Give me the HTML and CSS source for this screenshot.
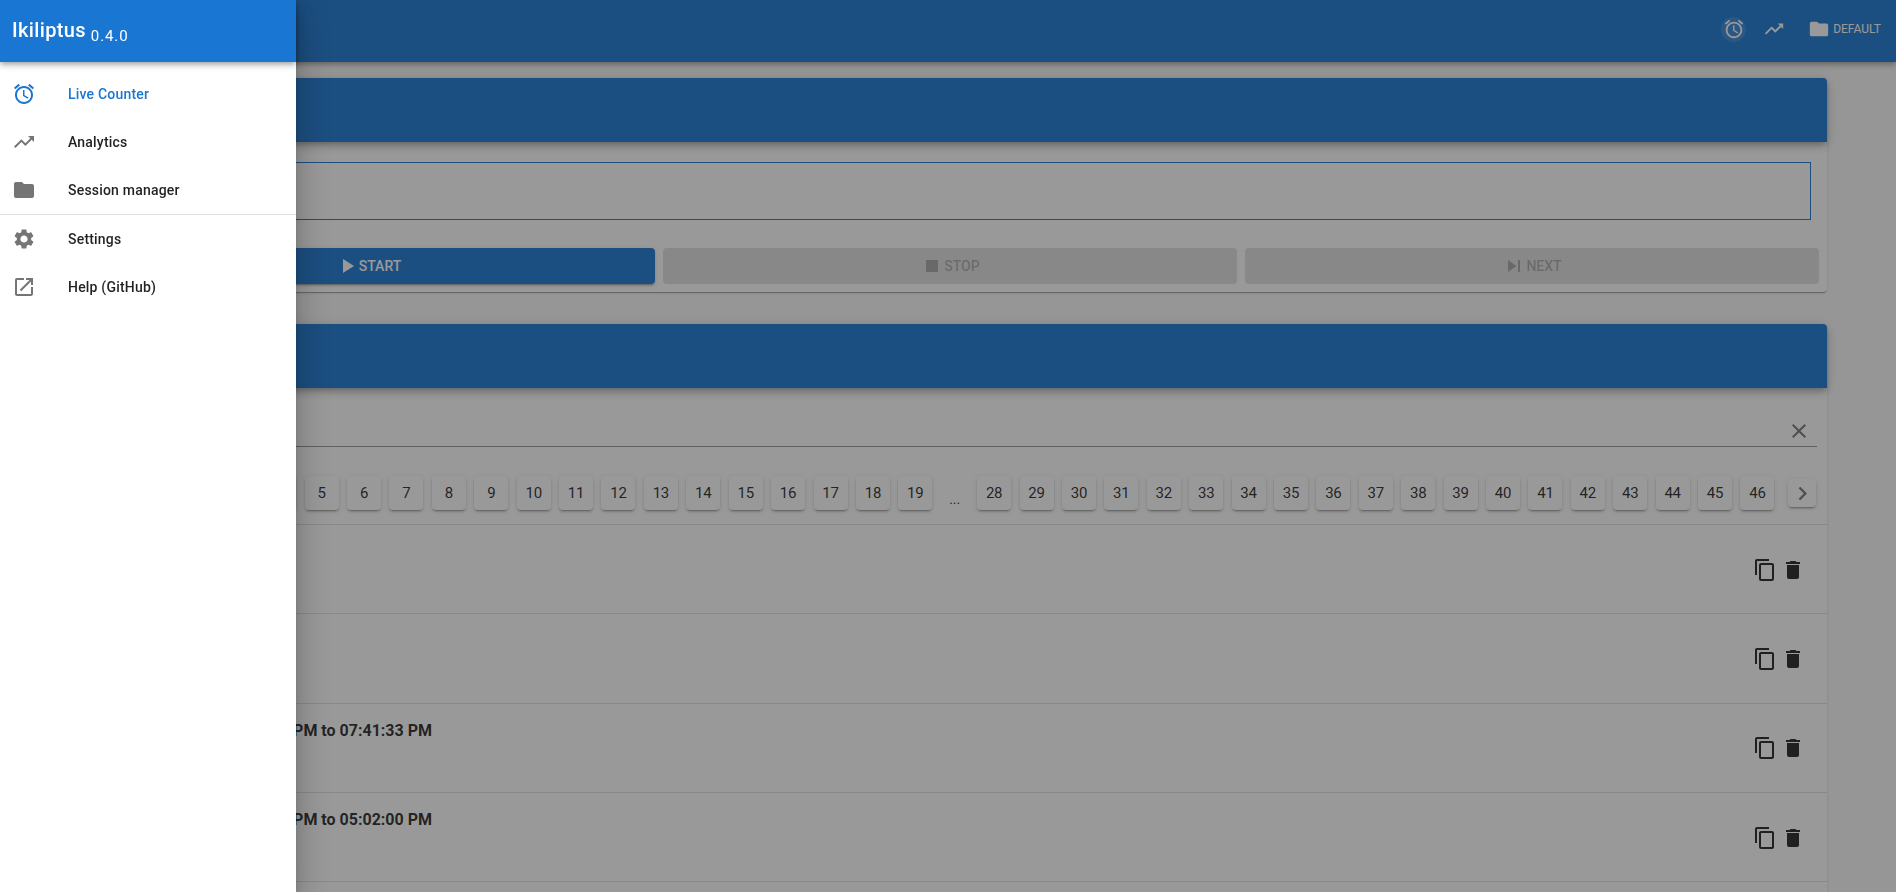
FILE: index.html
```html
<!DOCTYPE html>

<html>

<head>
    <title>Ikiliptus</title>
    <link rel="stylesheet" href="styles.css">
</head>

<body>
    <svg class="icon-defs" width="0" height="0">
        <symbol id="i-alarm" viewBox="0 0 24 24"><path d="M22 5.72l-4.6-3.86-1.29 1.53 4.6 3.86L22 5.72zM7.88 3.39L6.6 1.86 2 5.71l1.29 1.53 4.59-3.85zM12.5 8H11v6l4.75 2.85.75-1.23-4-2.37V8zM12 4c-4.97 0-9 4.03-9 9s4.02 9 9 9c4.97 0 9-4.03 9-9s-4.03-9-9-9zm0 16c-3.87 0-7-3.13-7-7s3.13-7 7-7 7 3.13 7 7-3.13 7-7 7z"/></symbol>
        <symbol id="i-trend" viewBox="0 0 24 24"><path d="M16 6l2.29 2.29-4.88 4.88-4-4L2 16.59 3.41 18l6-6 4 4 6.3-6.29L22 12V6z"/></symbol>
        <symbol id="i-folder" viewBox="0 0 24 24"><path d="M10 4H4c-1.1 0-1.99.9-1.99 2L2 18c0 1.1.9 2 2 2h16c1.1 0 2-.9 2-2V8c0-1.1-.9-2-2-2h-8l-2-2z"/></symbol>
        <symbol id="i-settings" viewBox="0 0 24 24"><path d="M19.14 12.94c.04-.3.06-.61.06-.94 0-.32-.02-.64-.07-.94l2.03-1.58c.18-.14.23-.41.12-.61l-1.92-3.32c-.12-.22-.37-.29-.59-.22l-2.39.96c-.5-.38-1.03-.7-1.62-.94l-.36-2.54c-.04-.24-.24-.41-.48-.41h-3.84c-.24 0-.43.17-.47.41l-.36 2.54c-.59.24-1.13.57-1.62.94l-2.39-.96c-.22-.08-.47 0-.59.22L2.74 8.87c-.12.21-.08.47.12.61l2.03 1.58c-.05.3-.09.63-.09.94s.02.64.07.94l-2.03 1.58c-.18.14-.23.41-.12.61l1.92 3.32c.12.22.37.29.59.22l2.39-.96c.5.38 1.03.7 1.62.94l.36 2.54c.05.24.24.41.48.41h3.84c.24 0 .44-.17.47-.41l.36-2.54c.59-.24 1.13-.56 1.62-.94l2.39.96c.22.08.47 0 .59-.22l1.92-3.32c.12-.22.07-.47-.12-.61l-2.01-1.58zM12 15.6c-1.98 0-3.6-1.62-3.6-3.6s1.62-3.6 3.6-3.6 3.6 1.62 3.6 3.6-1.62 3.6-3.6 3.6z"/></symbol>
        <symbol id="i-open" viewBox="0 0 24 24"><path d="M19 19H5V5h7V3H5c-1.11 0-2 .9-2 2v14c0 1.1.89 2 2 2h14c1.1 0 2-.9 2-2v-7h-2v7zM14 3v2h3.59l-9.83 9.83 1.41 1.41L19 6.41V10h2V3h-7z"/></symbol>
        <symbol id="i-play" viewBox="0 0 24 24"><path d="M8 5v14l11-7z"/></symbol>
        <symbol id="i-stop" viewBox="0 0 24 24"><path d="M6 6h12v12H6z"/></symbol>
        <symbol id="i-next" viewBox="0 0 24 24"><path d="M6 18l8.5-6L6 6v12zM16 6v12h2V6h-2z"/></symbol>
        <symbol id="i-close" viewBox="0 0 24 24"><path d="M19 6.41L17.59 5 12 10.59 6.41 5 5 6.41 10.59 12 5 17.59 6.41 19 12 13.41 17.59 19 19 17.59 13.41 12z"/></symbol>
        <symbol id="i-left" viewBox="0 0 24 24"><path d="M15.41 7.41L14 6l-6 6 6 6 1.41-1.41L10.83 12z"/></symbol>
        <symbol id="i-right" viewBox="0 0 24 24"><path d="M10 6L8.59 7.41 13.17 12l-4.58 4.59L10 18l6-6z"/></symbol>
        <symbol id="i-copy" viewBox="0 0 24 24"><path d="M16 1H4c-1.1 0-2 .9-2 2v14h2V3h12V1zm3 4H8c-1.1 0-2 .9-2 2v14c0 1.1.9 2 2 2h11c1.1 0 2-.9 2-2V7c0-1.1-.9-2-2-2zm0 16H8V7h11v14z"/></symbol>
        <symbol id="i-delete" viewBox="0 0 24 24"><path d="M6 19c0 1.1.9 2 2 2h8c1.1 0 2-.9 2-2V7H6v12zM19 4h-3.5l-1-1h-5l-1 1H5v2h14V4z"/></symbol>
    </svg>

    <header class="toolbar">
        <span class="tool-btn tool-active"><svg class="icon-tool"><use href="#i-alarm"/></svg></span>
        <span class="tool-btn"><svg class="icon-tool"><use href="#i-trend"/></svg></span>
        <span class="tool-session"><svg class="icon-tool"><use href="#i-folder"/></svg>DEFAULT</span>
    </header>

    <main class="content">
        <section class="card">
            <div class="card-head"></div>
            <div class="counter-box"></div>
            <div class="actions">
                <button class="action action-primary"><svg class="icon"><use href="#i-play"/></svg>START</button>
                <button class="action"><svg class="icon"><use href="#i-stop"/></svg>STOP</button>
                <button class="action"><svg class="icon"><use href="#i-next"/></svg>NEXT</button>
            </div>
        </section>

        <section class="card">
            <div class="card-head"></div>
            <div class="filter">
                <svg class="icon icon-grey"><use href="#i-close"/></svg>
            </div>
            <div class="pager">
                <button class="page page-arrow"><svg class="icon-arrow"><use href="#i-left"/></svg></button>
                <button class="page page-first">1</button>
                <button class="page">2</button>
                <button class="page">3</button>
                <button class="page">4</button>
                <button class="page">5</button>
                <button class="page">6</button>
                <button class="page">7</button>
                <button class="page">8</button>
                <button class="page">9</button>
                <button class="page">10</button>
                <button class="page">11</button>
                <button class="page">12</button>
                <button class="page">13</button>
                <button class="page">14</button>
                <button class="page">15</button>
                <button class="page">16</button>
                <button class="page">17</button>
                <button class="page">18</button>
                <button class="page">19</button>
                <span class="page-gap">...</span>
                <button class="page">28</button>
                <button class="page">29</button>
                <button class="page">30</button>
                <button class="page">31</button>
                <button class="page">32</button>
                <button class="page">33</button>
                <button class="page">34</button>
                <button class="page">35</button>
                <button class="page">36</button>
                <button class="page">37</button>
                <button class="page">38</button>
                <button class="page">39</button>
                <button class="page">40</button>
                <button class="page">41</button>
                <button class="page">42</button>
                <button class="page">43</button>
                <button class="page">44</button>
                <button class="page">45</button>
                <button class="page">46</button>
                <button class="page page-arrow page-last"><svg class="icon-arrow"><use href="#i-right"/></svg></button>
            </div>

            <div class="row">
                <div class="row-title"></div>
                <div class="row-tools">
                    <svg class="icon"><use href="#i-copy"/></svg>
                    <svg class="icon"><use href="#i-delete"/></svg>
                </div>
            </div>
            <div class="row">
                <div class="row-title"></div>
                <div class="row-tools">
                    <svg class="icon"><use href="#i-copy"/></svg>
                    <svg class="icon"><use href="#i-delete"/></svg>
                </div>
            </div>
            <div class="row">
                <div class="row-title">07:12:48 PM to 07:41:33 PM</div>
                <div class="row-tools">
                    <svg class="icon"><use href="#i-copy"/></svg>
                    <svg class="icon"><use href="#i-delete"/></svg>
                </div>
            </div>
            <div class="row">
                <div class="row-title">04:36:05 PM to 05:02:00 PM</div>
                <div class="row-tools">
                    <svg class="icon"><use href="#i-copy"/></svg>
                    <svg class="icon"><use href="#i-delete"/></svg>
                </div>
            </div>
            <div class="row"></div>
        </section>
    </main>

    <div class="backdrop"></div>

    <aside class="drawer">
        <div class="drawer-head">
            <span class="brand">Ikiliptus</span>
            <span class="version">0.4.0</span>
        </div>
        <nav class="nav">
            <a class="nav-item nav-active"><svg class="icon"><use href="#i-alarm"/></svg>Live Counter</a>
            <a class="nav-item"><svg class="icon"><use href="#i-trend"/></svg>Analytics</a>
            <a class="nav-item"><svg class="icon"><use href="#i-folder"/></svg>Session manager</a>
            <hr class="nav-line">
            <a class="nav-item"><svg class="icon"><use href="#i-settings"/></svg>Settings</a>
            <a class="nav-item"><svg class="icon"><use href="#i-open"/></svg>Help (GitHub)</a>
        </nav>
    </aside>
</body>

</html>
```

FILE: styles.css
```css
html,
body {
    height: 100%;
}

body {
    margin: 0;
    overflow: hidden;
    background-color: #fafafa;
    color: rgba(0, 0, 0, 0.87);
    font-family: Roboto, 'Noto Sans', sans-serif;
    font-size: 14px;
}

.icon-defs {
    display: block;
    height: 0;
}

.icon {
    display: block;
    flex: none;
    width: 24px;
    height: 24px;
    fill: currentColor;
}

.icon-grey {
    fill: rgba(0, 0, 0, 0.54);
}

.icon-tool {
    display: block;
    flex: none;
    width: 22px;
    height: 22px;
    fill: currentColor;
}

.icon-arrow {
    display: block;
    flex: none;
    width: 27px;
    height: 27px;
    fill: rgba(0, 0, 0, 0.54);
}

/* top bar */
.toolbar {
    display: flex;
    align-items: center;
    justify-content: flex-end;
    height: 58px;
    padding: 0 15px 4px 0;
    background-color: #1976d2;
    color: #fff;
    box-shadow: 0 2px 4px -1px rgba(0, 0, 0, 0.2), 0 4px 5px rgba(0, 0, 0, 0.14), 0 1px 10px rgba(0, 0, 0, 0.12);
}

.tool-btn {
    display: flex;
    align-items: center;
    justify-content: center;
    width: 25px;
    height: 25px;
    margin-right: 15px;
    border-radius: 50%;
}

.tool-active {
    background-color: rgba(255, 255, 255, 0.12);
}

.tool-session {
    display: flex;
    align-items: center;
    gap: 3px;
    margin-left: 7px;
    font-size: 12px;
}

/* page content */
.content {
    padding: 16px 69px 0 73px;
}

.card {
    margin-bottom: 32px;
    background-color: #fff;
    border-radius: 4px;
    box-shadow: 0 2px 1px -1px rgba(0, 0, 0, 0.2), 0 1px 1px rgba(0, 0, 0, 0.14), 0 1px 3px rgba(0, 0, 0, 0.12);
}

.card-head {
    height: 64px;
    background-color: #1976d2;
    border-radius: 4px 4px 0 0;
    box-shadow: 0 3px 5px -1px rgba(0, 0, 0, 0.2), 0 5px 8px rgba(0, 0, 0, 0.14), 0 1px 14px rgba(0, 0, 0, 0.12);
}

.counter-box {
    height: 56px;
    margin: 20px 16px 0;
    border: 1px solid #1976d2;
}

.actions {
    display: flex;
    gap: 8px;
    padding: 28px 8px 8px;
}

.action {
    display: flex;
    flex: 1;
    align-items: center;
    justify-content: center;
    height: 36px;
    padding: 0;
    border: none;
    border-radius: 4px;
    background-color: rgba(0, 0, 0, 0.12);
    color: rgba(0, 0, 0, 0.26);
    font-family: inherit;
    font-size: 14px;
    font-weight: 500;
}

.action-primary {
    background-color: #1976d2;
    color: #fff;
    box-shadow: 0 3px 1px -2px rgba(0, 0, 0, 0.2), 0 2px 2px rgba(0, 0, 0, 0.14), 0 1px 5px rgba(0, 0, 0, 0.12);
}

.filter {
    display: flex;
    align-items: flex-end;
    justify-content: flex-end;
    box-sizing: border-box;
    height: 59px;
    margin: 0 10px 0 16px;
    padding: 0 6px 3px 0;
    border-bottom: 1px solid rgba(0, 0, 0, 0.42);
}

.pager {
    display: flex;
    align-items: center;
    gap: 8.42px;
    height: 34px;
    padding: 29px 10px 14px 20px;
}

.page {
    flex: none;
    width: 34px;
    height: 34px;
    padding: 0;
    border: none;
    border-radius: 4px;
    background-color: #fff;
    color: rgba(0, 0, 0, 0.87);
    font-family: inherit;
    font-size: 15px;
    letter-spacing: -0.2px;
    box-shadow: 0 3px 1px -2px rgba(0, 0, 0, 0.2), 0 2px 2px rgba(0, 0, 0, 0.14), 0 1px 5px rgba(0, 0, 0, 0.12);
}

.page-arrow {
    display: flex;
    align-items: center;
    justify-content: center;
    width: 28px;
    height: 28px;
}

.page-first {
    margin-left: 5.6px;
}

.page-last {
    margin-left: 5.6px;
}

.page-gap {
    flex: none;
    width: 28px;
    padding-top: 12px;
    text-align: center;
}

.row {
    display: flex;
    justify-content: space-between;
    box-sizing: border-box;
    height: 89.3px;
    border-top: 1px solid rgba(0, 0, 0, 0.12);
}

.row-title {
    padding: 16px 0 0 152px;
    font-size: 16px;
    font-weight: 700;
    line-height: 21px;
}

.row-tools {
    display: flex;
    align-items: center;
    gap: 4px;
    padding: 1px 22px 0 0;
}

/* dark layer over the page while the side menu is open */
.backdrop {
    position: fixed;
    top: 0;
    right: 0;
    bottom: 0;
    left: 0;
    background-color: rgba(33, 33, 33, 0.46);
}

/* side menu */
.drawer {
    position: fixed;
    top: 0;
    bottom: 0;
    left: 0;
    width: 296px;
    background-color: #fff;
    box-shadow: 0 8px 10px -5px rgba(0, 0, 0, 0.2), 0 16px 24px 2px rgba(0, 0, 0, 0.14), 0 6px 30px 5px rgba(0, 0, 0, 0.12);
}

.drawer-head {
    display: flex;
    align-items: flex-start;
    gap: 5px;
    box-sizing: border-box;
    height: 62px;
    padding: 18px 12px 0;
    background-color: #1976d2;
    color: #fff;
    box-shadow: 0 2px 4px -1px rgba(0, 0, 0, 0.2), 0 4px 5px rgba(0, 0, 0, 0.14), 0 1px 10px rgba(0, 0, 0, 0.12);
}

.brand {
    font-size: 20px;
    font-weight: 500;
    letter-spacing: 0.35px;
}

.version {
    margin-top: 9px;
    font-size: 15px;
    letter-spacing: 0.9px;
}

.nav {
    padding-top: 8px;
}

.nav-item {
    display: flex;
    align-items: center;
    gap: 32px;
    height: 48px;
    padding-left: 12px;
    color: rgba(0, 0, 0, 0.87);
    font-weight: 500;
    letter-spacing: 0.2px;
}

.nav-item .icon {
    fill: rgba(0, 0, 0, 0.54);
}

.nav-active {
    color: #1976d2;
}

.nav-active .icon {
    fill: #1976d2;
}

.nav-line {
    height: 1px;
    margin: 0;
    border: none;
    background-color: rgba(0, 0, 0, 0.12);
}
```
